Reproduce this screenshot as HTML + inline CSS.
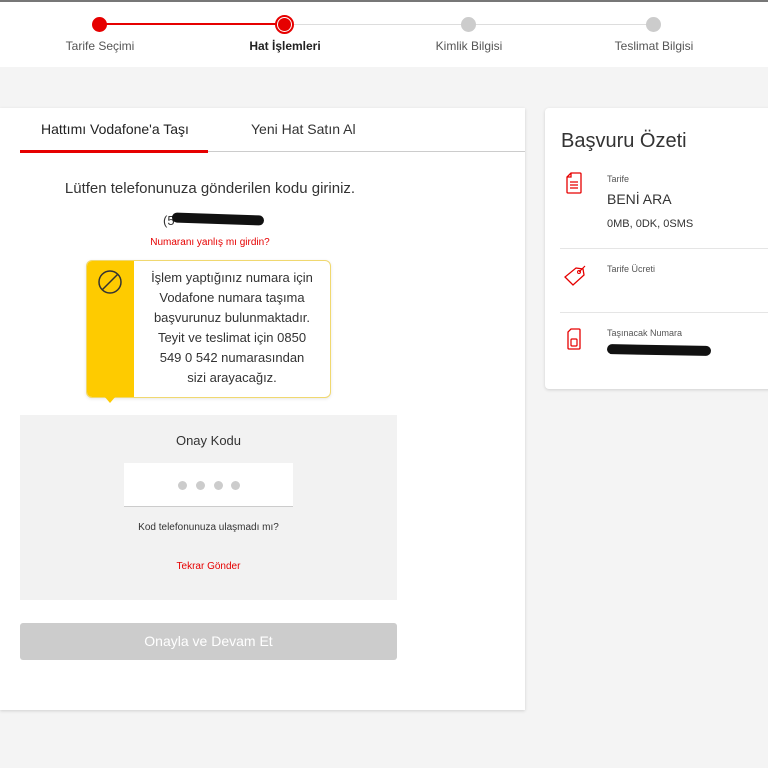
<!DOCTYPE html><html><head><meta charset="utf-8"><style>
*{box-sizing:border-box;margin:0;padding:0}
body{width:768px;height:768px;background:#f4f4f4;font-family:"Liberation Sans",sans-serif;color:#333;position:relative;overflow:hidden}
.a{position:absolute}
.hdr{left:0;top:0;width:768px;height:67px;background:#fff;border-top:2px solid #777}
.dot{width:15px;height:15px;border-radius:50%;background:#ccc}
.sd{width:9px;height:9px;border-radius:50%;background:#ccc;top:481px}
.lbl{font-size:12px;color:#555;transform:translateX(-50%);white-space:nowrap}
.blot{background:#111;border-radius:5px}
</style></head><body>
<div class="a hdr"></div>
<div class="a" style="left:99px;top:23px;width:185px;height:2px;background:#e60000"></div>
<div class="a" style="left:284px;top:24px;width:370px;height:1px;background:#ddd"></div>
<div class="a dot" style="left:92px;top:17px;background:#e60000"></div>
<div class="a" style="left:275px;top:15px;width:19px;height:19px;border-radius:50%;border:2px solid #e60000;background:#fff"></div>
<div class="a" style="left:278px;top:18px;width:13px;height:13px;border-radius:50%;background:#e60000"></div>
<div class="a dot" style="left:461px;top:17px"></div>
<div class="a dot" style="left:646px;top:17px"></div>
<div class="a lbl" style="left:100px;top:39px">Tarife Seçimi</div>
<div class="a lbl" style="left:285px;top:39px;color:#222;font-weight:bold">Hat İşlemleri</div>
<div class="a lbl" style="left:469px;top:39px">Kimlik Bilgisi</div>
<div class="a lbl" style="left:654px;top:39px">Teslimat Bilgisi</div>

<div class="a" style="left:0;top:108px;width:525px;height:602px;background:#fff;box-shadow:0 1px 3px rgba(0,0,0,.15)"></div>
<div class="a" style="left:41px;top:121px;font-size:14px;color:#222">Hattımı Vodafone'a Taşı</div>
<div class="a" style="left:251px;top:121px;font-size:14px;color:#333">Yeni Hat Satın Al</div>
<div class="a" style="left:20px;top:151px;width:505px;height:1px;background:#ccc"></div>
<div class="a" style="left:20px;top:150px;width:188px;height:3px;background:#e60000"></div>
<div class="a" style="left:0;width:420px;top:180px;text-align:center;font-size:15px;color:#333">Lütfen telefonunuza gönderilen kodu giriniz.</div>
<div class="a" style="left:163px;top:213px;font-size:13px">(5</div>
<div class="a blot" style="left:172px;top:214px;width:92px;height:10px;transform:rotate(2deg)"></div>
<div class="a" style="left:0;width:420px;top:237px;text-align:center;font-size:10px;color:#e60000">Numaranı yanlış mı girdin?</div>
<div class="a" style="left:86px;top:260px;width:245px;height:138px;background:#fff;border:1px solid #f0d870;border-radius:6px;overflow:hidden;box-shadow:0 1px 3px rgba(0,0,0,.1)">
<div style="position:absolute;left:0;top:0;width:47px;height:100%;background:#fecb00"></div>
<svg style="position:absolute;left:10px;top:8px" width="26" height="26" viewBox="0 0 26 26"><circle cx="13" cy="13" r="11" fill="none" stroke="#333" stroke-width="1.5"/><line x1="5" y1="21" x2="21" y2="5" stroke="#333" stroke-width="1.5"/></svg>
<div style="position:absolute;left:47px;right:0;top:7px;text-align:center;font-size:13px;line-height:20px;color:#333">İşlem yaptığınız numara için<br>Vodafone numara taşıma<br>başvurunuz bulunmaktadır.<br>Teyit ve teslimat için 0850<br>549 0 542 numarasından<br>sizi arayacağız.</div></div>
<div class="a" style="left:104px;top:396px;width:0;height:0;border-left:6px solid transparent;border-right:6px solid transparent;border-top:7px solid #fecb00"></div>
<div class="a" style="left:20px;top:415px;width:377px;height:185px;background:#f2f2f2"></div>
<div class="a" style="left:20px;width:377px;top:433px;text-align:center;font-size:13px;color:#333">Onay Kodu</div>
<div class="a" style="left:124px;top:463px;width:169px;height:44px;background:#fff;border-bottom:1px solid #ccc"></div>
<div class="a sd" style="left:178px"></div>
<div class="a sd" style="left:196px"></div>
<div class="a sd" style="left:214px"></div>
<div class="a sd" style="left:231px"></div>
<div class="a" style="left:20px;width:377px;top:522px;text-align:center;font-size:10px;color:#333">Kod telefonunuza ulaşmadı mı?</div>
<div class="a" style="left:20px;width:377px;top:561px;text-align:center;font-size:10px;color:#e60000">Tekrar Gönder</div>
<div class="a" style="left:20px;top:623px;width:377px;height:37px;background:#ccc;border-radius:3px;color:#fff;font-size:14px;text-align:center;line-height:37px">Onayla ve Devam Et</div>

<div class="a" style="left:545px;top:108px;width:230px;height:281px;background:#fff;border-radius:4px;box-shadow:0 1px 3px rgba(0,0,0,.15)"></div>
<div class="a" style="left:561px;top:130px;font-size:20px;color:#333">Başvuru Özeti</div>
<svg class="a" style="left:566px;top:172px" width="16" height="22" viewBox="0 0 16 22"><path d="M5 1H14Q15 1 15 2V20Q15 21 14 21H2Q1 21 1 20V5Z M1 5H5V1" fill="none" stroke="#e60000" stroke-width="1.3"/><path d="M4 10H12M4 13H12M4 16H12" stroke="#e60000" stroke-width="1.2"/></svg>
<div class="a" style="left:607px;top:174px;font-size:9px;color:#555">Tarife</div>
<div class="a" style="left:607px;top:191px;font-size:14px;color:#333">BENİ ARA</div>
<div class="a" style="left:607px;top:218px;font-size:11px;color:#333">0MB, 0DK, 0SMS</div>
<div class="a" style="left:560px;top:248px;width:208px;height:1px;background:#e5e5e5"></div>
<svg class="a" style="left:562px;top:263px" width="24" height="24" viewBox="0 0 24 24"><path d="M14 5L21 6L22 12L11 22L3 14Z" fill="none" stroke="#e60000" stroke-width="1.3"/><circle cx="17" cy="9" r="1.5" fill="none" stroke="#e60000"/><path d="M17 9L23 3" stroke="#e60000" stroke-width="1.2"/></svg>
<div class="a" style="left:607px;top:264px;font-size:9px;color:#555">Tarife Ücreti</div>
<div class="a" style="left:560px;top:312px;width:208px;height:1px;background:#e5e5e5"></div>
<svg class="a" style="left:567px;top:328px" width="14" height="22" viewBox="0 0 14 22"><path d="M4 1H12Q13 1 13 2V20Q13 21 12 21H2Q1 21 1 20V4Z" fill="none" stroke="#e60000" stroke-width="1.3"/><rect x="4" y="11" width="6" height="7" rx="1" fill="none" stroke="#e60000" stroke-width="1.2"/></svg>
<div class="a" style="left:607px;top:328px;font-size:9px;color:#555">Taşınacak Numara</div>
<div class="a blot" style="left:607px;top:345px;width:104px;height:10px;transform:rotate(1deg)"></div>
</body></html>
